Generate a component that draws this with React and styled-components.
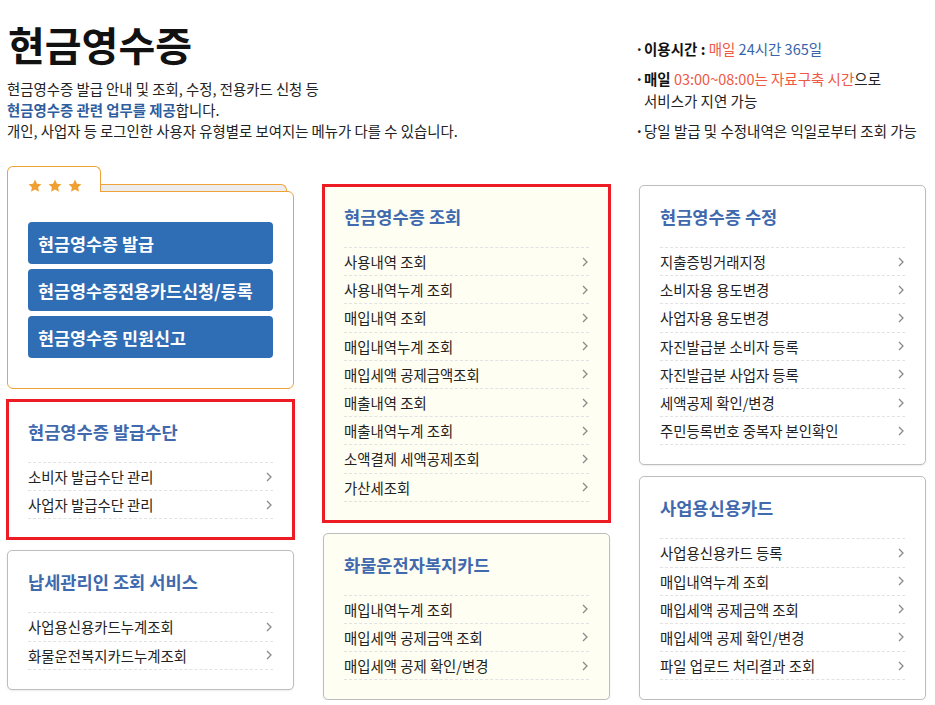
import styled, { createGlobalStyle } from "styled-components"

const GlobalStyle = createGlobalStyle`
  * { box-sizing: border-box; }
  body {
    margin: 0;
    background: #ffffff;
    color: #222222;
    font-family: "Noto Sans CJK KR", "Noto Sans", "Liberation Sans", sans-serif;
  }
`

const quickMenus = ["현금영수증 발급", "현금영수증전용카드신청/등록", "현금영수증 민원신고"]

const columns = [
  {
    offset: 0,
    cards: [
      {
        title: "현금영수증 발급수단",
        marked: true,
        items: ["소비자 발급수단 관리", "사업자 발급수단 관리"],
      },
      {
        title: "납세관리인 조회 서비스",
        items: ["사업용신용카드누계조회", "화물운전복지카드누계조회"],
      },
    ],
  },
  {
    offset: 18,
    cards: [
      {
        title: "현금영수증 조회",
        marked: true,
        tinted: true,
        items: [
          "사용내역 조회",
          "사용내역누계 조회",
          "매입내역 조회",
          "매입내역누계 조회",
          "매입세액 공제금액조회",
          "매출내역 조회",
          "매출내역누계 조회",
          "소액결제 세액공제조회",
          "가산세조회",
        ],
      },
      {
        title: "화물운전자복지카드",
        tinted: true,
        items: ["매입내역누계 조회", "매입세액 공제금액 조회", "매입세액 공제 확인/변경"],
      },
    ],
  },
  {
    offset: 18,
    cards: [
      {
        title: "현금영수증 수정",
        items: [
          "지출증빙거래지정",
          "소비자용 용도변경",
          "사업자용 용도변경",
          "자진발급분 소비자 등록",
          "자진발급분 사업자 등록",
          "세액공제 확인/변경",
          "주민등록번호 중복자 본인확인",
        ],
      },
      {
        title: "사업용신용카드",
        items: [
          "사업용신용카드 등록",
          "매입내역누계 조회",
          "매입세액 공제금액 조회",
          "매입세액 공제 확인/변경",
          "파일 업로드 처리결과 조회",
        ],
      },
    ],
  },
]

function Star() {
  return (
    <StarIcon viewBox="0 0 24 24">
      <path d="M12 1l3.3 7 7.7.9-5.7 5.2 1.5 7.6L12 17.9l-6.8 3.8 1.5-7.6L1 8.9 8.7 8z" />
    </StarIcon>
  )
}

function Chevron() {
  return (
    <ChevronIcon viewBox="0 0 6 10">
      <path d="M1 1l4 4-4 4" />
    </ChevronIcon>
  )
}

function MenuCard({ card }) {
  return (
    <Card $tinted={card.tinted} $marked={card.marked}>
      <CardTitle>{card.title}</CardTitle>
      <MenuList>
        {card.items.map((item) => (
          <MenuItem key={item}>
            <span>{item}</span>
            <Chevron />
          </MenuItem>
        ))}
      </MenuList>
    </Card>
  )
}

export default function App() {
  return (
    <Page>
      <GlobalStyle />
      <Header>
        <Intro>
          <PageTitle>현금영수증</PageTitle>
          <Description>
            현금영수증 발급 안내 및 조회, 수정, 전용카드 신청 등
            <br />
            <Accent>현금영수증 관련 업무를 제공</Accent>합니다.
            <br />
            개인, 사업자 등 로그인한 사용자 유형별로 보여지는 메뉴가 다를 수 있습니다.
          </Description>
        </Intro>
        <Notice>
          <NoticeItem>
            <Dot>·</Dot>
            <span>
              <b>이용시간 : </b>
              <Red>매일</Red> <Blue>24시간 365일</Blue>
            </span>
          </NoticeItem>
          <NoticeItem>
            <Dot>·</Dot>
            <span>
              <b>매일</b> <Red>03:00~08:00는 자료구축 시간</Red>으로
              <br />
              서비스가 지연 가능
            </span>
          </NoticeItem>
          <NoticeItem>
            <Dot>·</Dot>
            <span>당일 발급 및 수정내역은 익일로부터 조회 가능</span>
          </NoticeItem>
        </Notice>
      </Header>

      <Grid>
        {columns.map((column, index) => (
          <Column key={index} $offset={column.offset}>
            {index === 0 && (
              <Folder>
                <FolderHead>
                  <Tab>
                    <Star />
                    <Star />
                    <Star />
                  </Tab>
                  <TabBack />
                </FolderHead>
                <FolderBody>
                  {quickMenus.map((label) => (
                    <QuickButton key={label}>{label}</QuickButton>
                  ))}
                </FolderBody>
              </Folder>
            )}
            {column.cards.map((card) => (
              <MenuCard key={card.title} card={card} />
            ))}
          </Column>
        ))}
      </Grid>
    </Page>
  )
}

const Page = styled.div`
  width: 935px;
  padding: 20px 9px 0 7px;
`

const Header = styled.header`
  display: flex;
  justify-content: space-between;
  align-items: flex-start;
`

const Intro = styled.div`
  display: flex;
  flex-direction: column;
`

const PageTitle = styled.h1`
  margin: 0 0 10px 1px;
  font-size: 40px;
  line-height: 48px;
  font-weight: 700;
  color: #111111;
`

const Description = styled.p`
  margin: 0;
  font-size: 14.4px;
  line-height: 21px;
  color: #222222;
`

const Accent = styled.span`
  color: #2f5d9e;
  font-weight: 700;
`

const Notice = styled.ul`
  width: 291px;
  margin: 18px 0 0;
  padding: 0;
  list-style: none;
  display: flex;
  flex-direction: column;
  gap: 8px;
  font-size: 14.5px;
  line-height: 22px;
  color: #222222;
`

const NoticeItem = styled.li`
  display: flex;
  white-space: nowrap;

  b {
    font-weight: 700;
    color: #111111;
  }
`

const Dot = styled.span`
  width: 9px;
  flex-shrink: 0;
  font-weight: 700;
`

const Red = styled.span`
  color: #ef5844;
`

const Blue = styled.span`
  color: #3765a8;
`

const Grid = styled.div`
  display: grid;
  grid-template-columns: repeat(3, 287px);
  column-gap: 29px;
  align-items: start;
  margin-top: 25px;
`

const Column = styled.div`
  display: flex;
  flex-direction: column;
  gap: 11px;
  margin-top: ${(props) => props.$offset}px;
`

const Folder = styled.div`
  display: flex;
  flex-direction: column;
`

const FolderHead = styled.div`
  display: flex;
  align-items: flex-end;
  height: 25px;
  margin-bottom: -1px;
`

const Tab = styled.div`
  position: relative;
  z-index: 1;
  width: 94px;
  height: 26px;
  display: flex;
  gap: 6px;
  padding: 12px 0 0 20px;
  background: #ffffff;
  border: 1px solid #f0a23a;
  border-bottom: none;
  border-radius: 6px 6px 0 0;
`

const TabBack = styled.div`
  flex: 1;
  height: 8px;
  margin: 0 7px 0 -1px;
  background: #ececec;
  border: 1px solid #f0a23a;
  border-bottom: none;
  border-radius: 0 6px 0 0;
`

const StarIcon = styled.svg`
  width: 14px;
  height: 14px;
  fill: #f0a030;
`

const FolderBody = styled.div`
  display: flex;
  flex-direction: column;
  gap: 5px;
  padding: 30px 20px 30px 20px;
  border: 1px solid #f0a23a;
  border-radius: 0 6px 6px 6px;
  background: #ffffff;
`

const QuickButton = styled.button`
  height: 42px;
  display: flex;
  align-items: center;
  padding: 0 10px;
  border: none;
  border-radius: 4px;
  background: #2f6db4;
  color: #ffffff;
  font-family: inherit;
  font-size: 17.4px;
  font-weight: 700;
  white-space: nowrap;
  cursor: pointer;
`

const Card = styled.section`
  position: relative;
  padding: 19px 20px 19px 20px;
  border: 1px solid #bdbdbd;
  border-radius: 5px;
  background: ${(props) => (props.$tinted ? "#fffef2" : "#ffffff")};
  box-shadow: 0 1px 2px rgba(0, 0, 0, 0.08);

  &::after {
    content: "";
    display: ${(props) => (props.$marked ? "block" : "none")};
    position: absolute;
    inset: -2px;
    border: 3px solid #ed1c24;
    pointer-events: none;
  }
`

const CardTitle = styled.h2`
  margin: 0 0 19px;
  font-size: 17.6px;
  line-height: 23px;
  font-weight: 700;
  color: #4069ae;
`

const MenuList = styled.ul`
  margin: 0;
  padding: 0;
  list-style: none;
  border-bottom: 1px dashed #e2e2e2;
`

const MenuItem = styled.li`
  height: 28.2px;
  display: flex;
  align-items: center;
  justify-content: space-between;
  padding-right: 1px;
  border-top: 1px dashed #e2e2e2;
  font-size: 14.4px;
  color: #222222;
  white-space: nowrap;
  cursor: pointer;
`

const ChevronIcon = styled.svg`
  width: 6px;
  height: 10px;
  flex-shrink: 0;
  fill: none;
  stroke: #8a8a8a;
  stroke-width: 1.3;
`
